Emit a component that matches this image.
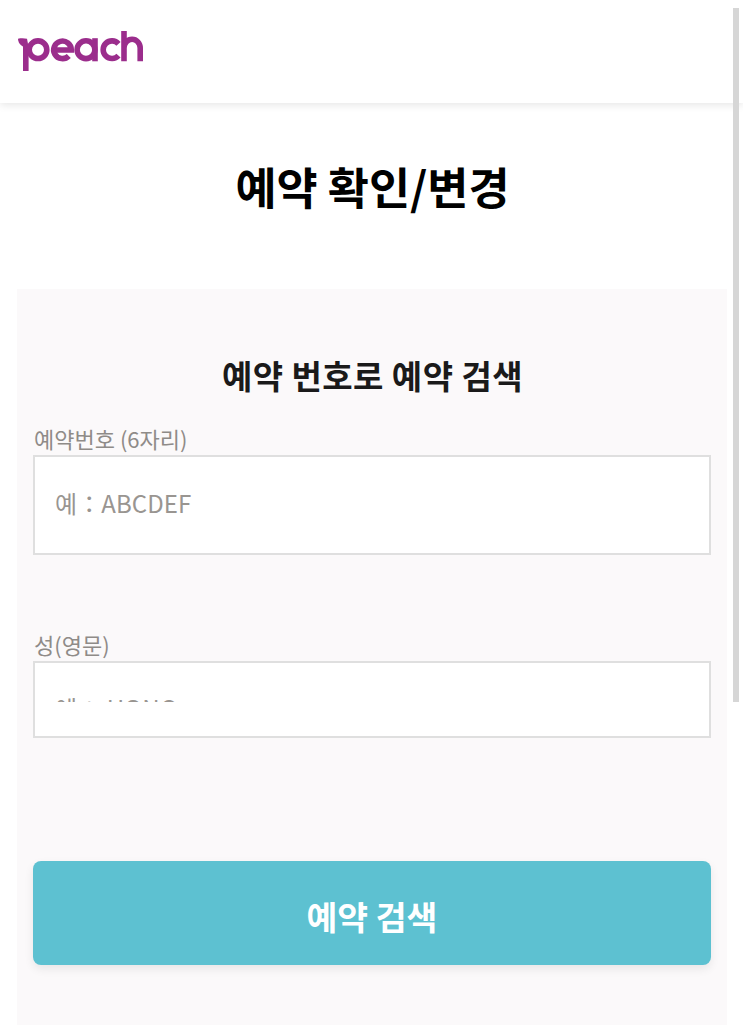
<script>
</script>

<div class="page">
  <header class="top">
    <svg class="logo" width="126" height="40" viewBox="18 31 126 40" aria-label="peach">
      <g fill="none" stroke="#9b2d8c" stroke-width="5.600">
        <path d="M25.800 71V44"/>
        <circle cx="38" cy="49.700" r="8.800"/>
        <path d="M53.500 50H71.300A8.800 8.800 0 1 0 68.800 56"/>
        <circle cx="86" cy="49.700" r="8.900"/>
        <path d="M95 38.200V61.300"/>
        <path d="M118.500 43.800A8.800 8.800 0 1 0 118.500 55.600"/>
        <path d="M124 31V61.300M124 48a8.100 8.700 0 0 1 16.200 0V61.300"/>
      </g>
      <path d="M18 38.800c3-.8 6.500-.6 9 0l1 5-4 3c-3-.5-6-4-6-8z" fill="#9b2d8c"/>
    </svg>
  </header>

  <h1>예약 확인/변경</h1>

  <section class="panel">
    <h2>예약 번호로 예약 검색</h2>
    <div class="field first">
      <span class="label">예약번호 (6자리)</span>
      <div class="input tall"><span class="ph">예：ABCDEF</span></div>
    </div>
    <div class="field second">
      <span class="label">성(영문)</span>
      <div class="input short"><span class="ph clip">예： HONG</span></div>
    </div>
    <button class="submit" type="button">예약 검색</button>
  </section>

  <div class="thumb"></div>
</div>

<style>
  :global(body) {
    margin: 0;
    background: #fff;
  }
  .page {
    position: relative;
    width: 743px;
    height: 1025px;
    overflow: hidden;
    font-family: "Noto Sans CJK KR", "Noto Sans", sans-serif;
  }
  .top {
    height: 103px;
    display: flex;
    align-items: flex-start;
    padding: 31px 0 0 18px;
    box-sizing: border-box;
    background: #fff;
    box-shadow: 0 2px 8px rgba(0, 0, 0, 0.1);
  }
  .logo {
    display: block;
  }
  h1 {
    margin: 0;
    padding: 52px 0 0 2px;
    height: 186px;
    box-sizing: border-box;
    width: 743px;
    text-align: center;
    font-size: 44.700px;
    line-height: 62px;
    font-weight: 700;
    color: #000;
  }
  .panel {
    margin-left: 17px;
    width: 710px;
    height: 736px;
    box-sizing: border-box;
    padding: 63px 16px 0;
    background: #fbf9fa;
  }
  h2 {
    margin: 0 0 0 1px;
    text-align: center;
    font-size: 33px;
    letter-spacing: 0.45px;
    line-height: 46px;
    font-weight: 700;
    color: #1a1a1a;
  }
  .field {
    display: flex;
    flex-direction: column;
  }
  .first {
    margin-top: 27px;
  }
  .second {
    margin-top: 76px;
  }
  .label {
    font-size: 22px;
    line-height: 26px;
    height: 30px;
    margin-left: 1px;
    color: #8f8b88;
  }
  .input {
    box-sizing: border-box;
    background: #fff;
    border: 2px solid #dfdfdf;
    padding-left: 20px;
    overflow: hidden;
  }
  .tall {
    height: 100px;
    padding-top: 27px;
  }
  .short {
    height: 77px;
  }
  .ph {
    display: block;
    font-size: 24px;
    line-height: 38px;
    letter-spacing: 0.1px;
    color: #999591;
  }
  .clip {
    height: 39px;
    overflow: hidden;
    line-height: 90px;
  }
  .submit {
    display: block;
    width: 678px;
    height: 104px;
    margin-top: 123px;
    padding: 4px 0 0;
    border: 0;
    border-radius: 8px;
    background: #5dc1d1;
    box-shadow: 0 4px 10px rgba(0, 0, 0, 0.08);
    color: #fff;
    font-family: inherit;
    font-size: 33.500px;
    font-weight: 700;
  }
  .thumb {
    position: absolute;
    left: 733px;
    top: 8px;
    width: 6px;
    height: 694px;
    background: #d6d6d6;
  }
</style>
